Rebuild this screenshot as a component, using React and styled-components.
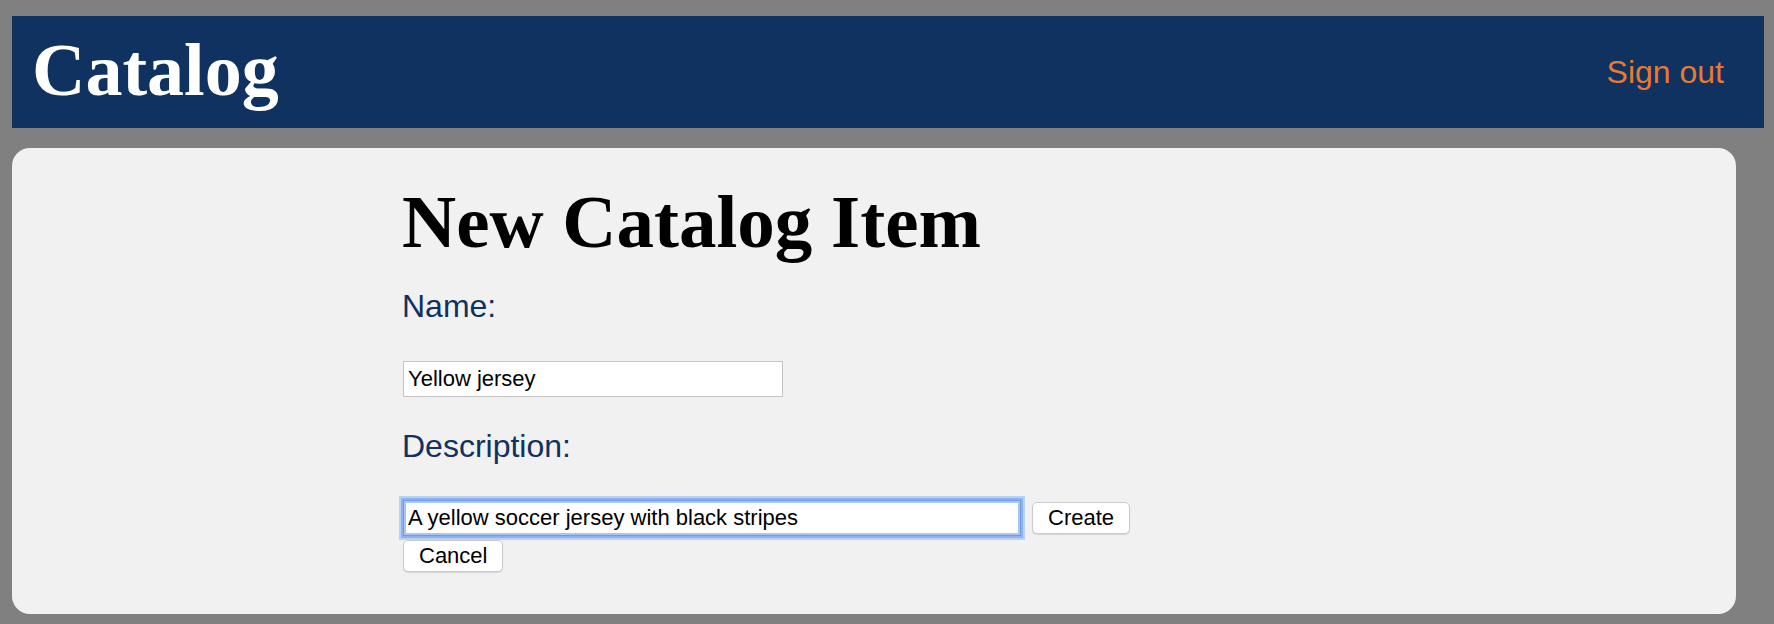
import React from "react";
import styled, { createGlobalStyle } from "styled-components";

const GlobalStyle = createGlobalStyle`
  html, body {
    margin: 0;
    padding: 0;
    background: #808080;
  }
  body {
    font-family: "Liberation Sans", Arial, sans-serif;
  }
  * {
    box-sizing: border-box;
  }
`;

const Page = styled.div`
  width: 1774px;
  height: 624px;
  overflow: hidden;
`;

const Header = styled.header`
  display: flex;
  align-items: center;
  justify-content: space-between;
  height: 112px;
  margin: 16px 10px 0 12px;
  padding: 0 40px 0 20px;
  background: #0f3260;
`;

const Brand = styled.h1`
  margin: 0 0 4px;
  font-family: "Liberation Serif", "Times New Roman", serif;
  font-weight: 700;
  font-size: 74px;
  line-height: 74px;
  color: #ffffff;
`;

const SignOut = styled.a`
  font-family: "Liberation Sans", Arial, sans-serif;
  font-size: 32px;
  line-height: 37px;
  color: #e8792e;
  text-decoration: none;
  cursor: pointer;
`;

const Card = styled.main`
  height: 466px;
  margin: 20px 38px 10px 12px;
  padding-top: 36px;
  background: #f1f1f1;
  border-radius: 18px;
`;

const Content = styled.div`
  width: 944px;
  margin: 0 auto;
`;

const Heading = styled.h2`
  margin: 0;
  font-family: "Liberation Serif", "Times New Roman", serif;
  font-weight: 700;
  font-size: 75px;
  line-height: 75px;
  color: #000000;
`;

const Label = styled.label`
  display: block;
  margin: ${(props) => (props.first ? "29px" : "31px")} 0 ${(props) => (props.first ? "36px" : "35px")};
  font-size: 32px;
  line-height: 37px;
  color: #0f3260;
`;

const TextInput = styled.input`
  display: block;
  width: ${(props) => props.width}px;
  height: 36px;
  margin-left: 1px;
  padding: 0 4px;
  font-family: "Liberation Sans", Arial, sans-serif;
  font-size: 22px;
  color: #000000;
  background: #ffffff;
  border: 1px solid ${(props) => (props.focused ? "#6f9be6" : "#c4c4c4")};
  border-radius: 0;
  outline: none;
  box-shadow: ${(props) =>
    props.focused
      ? "0 0 0 2px #8db2ee, 0 0 0 4px #b9d1f5, inset 0 0 0 2px #a9c5f2"
      : "none"};
`;

const ActionRow = styled.div`
  display: flex;
  align-items: center;
  gap: 11px;
`;

const Button = styled.button`
  height: 32px;
  margin-left: ${(props) => (props.stacked ? "1px" : "0")};
  margin-top: ${(props) => (props.stacked ? "4px" : "0")};
  padding: 0 15px;
  font-family: "Liberation Sans", Arial, sans-serif;
  font-size: 22px;
  color: #000000;
  background: #ffffff;
  border: 1px solid #cbcbcb;
  border-radius: 5px;
  box-shadow: 0 1px 1px rgba(0, 0, 0, 0.12);
  cursor: pointer;
`;

export default function App() {
  return (
    <Page>
      <GlobalStyle />
      <Header>
        <Brand>Catalog</Brand>
        <SignOut>Sign out</SignOut>
      </Header>
      <Card>
        <Content>
          <Heading>New Catalog Item</Heading>
          <form onSubmit={(e) => e.preventDefault()}>
            <Label htmlFor="item-name" first>
              Name:
            </Label>
            <TextInput id="item-name" width={380} defaultValue="Yellow jersey" />
            <Label htmlFor="item-description">Description:</Label>
            <ActionRow>
              <TextInput
                id="item-description"
                width={618}
                focused
                defaultValue="A yellow soccer jersey with black stripes"
              />
              <Button type="submit">Create</Button>
            </ActionRow>
            <Button type="button" stacked>
              Cancel
            </Button>
          </form>
        </Content>
      </Card>
    </Page>
  );
}
